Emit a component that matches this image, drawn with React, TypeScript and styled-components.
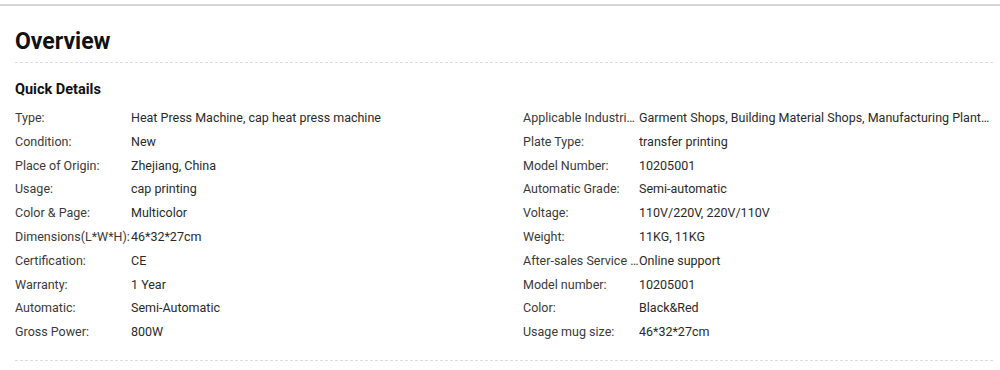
import React from 'react'
import styled, { createGlobalStyle } from 'styled-components'

const GlobalStyle = createGlobalStyle`
  html, body {
    margin: 0;
    padding: 0;
    background: #fff;
  }
  body {
    font-family: Roboto, "Liberation Sans", Arial, sans-serif;
    color: #333;
  }
`

const left = [
  ['Type:', 'Heat Press Machine, cap heat press machine'],
  ['Condition:', 'New'],
  ['Place of Origin:', 'Zhejiang, China'],
  ['Usage:', 'cap printing'],
  ['Color & Page:', 'Multicolor'],
  ['Dimensions(L*W*H):', '46*32*27cm'],
  ['Certification:', 'CE'],
  ['Warranty:', '1 Year'],
  ['Automatic:', 'Semi-Automatic'],
  ['Gross Power:', '800W'],
]

const right = [
  ['Applicable Industries:', 'Garment Shops, Building Material Shops, Manufacturing Plant, Printing Shops, Advertising Company'],
  ['Plate Type:', 'transfer printing'],
  ['Model Number:', '10205001'],
  ['Automatic Grade:', 'Semi-automatic'],
  ['Voltage:', '110V/220V, 220V/110V'],
  ['Weight:', '11KG, 11KG'],
  ['After-sales Service Provided:', 'Online support'],
  ['Model number:', '10205001'],
  ['Color:', 'Black&Red'],
  ['Usage mug size:', '46*32*27cm'],
]

const Panel = styled.section`
  margin-top: 4px;
  border-top: 2px solid #d6d6d6;
  padding: 0 7px 0 15px;
`

const Title = styled.h2`
  margin: 0;
  padding-top: 20px;
  height: 36px;
  font-size: 23px;
  line-height: 31px;
  font-weight: 700;
  color: #111;
  border-bottom: 1px dashed #ddd;
`

const SubTitle = styled.h3`
  margin: 0;
  padding-top: 17px;
  font-size: 14.5px;
  line-height: 20px;
  font-weight: 700;
  color: #111;
`

const Columns = styled.div`
  display: grid;
  grid-template-columns: 508px 1fr;
  padding: 6px 0 16px;
  border-bottom: 1px dashed #ddd;
`

const List = styled.dl<{ $inset?: number }>`
  margin: 0;
  min-width: 0;
  padding-right: ${p => p.$inset ?? 0}px;
`

const Row = styled.div`
  display: grid;
  grid-template-columns: 116px minmax(0, 1fr);
  height: 23.8px;
  line-height: 23.8px;
  font-size: 12.5px;
`

const Cell = styled.span<{ $label?: boolean }>`
  margin: 0;
  white-space: nowrap;
  overflow: hidden;
  text-overflow: ellipsis;
  color: ${p => (p.$label ? '#3a3a3a' : '#2a2a2a')};
  min-width: 0;
`

const Specs = ({ rows, inset }: { rows: string[][]; inset?: number }) => (
  <List $inset={inset}>
    {rows.map(([k, v]) => (
      <Row key={k}>
        <Cell as="dt" $label>{k}</Cell>
        <Cell as="dd">{v}</Cell>
      </Row>
    ))}
  </List>
)

export default function App() {
  return (
    <>
      <GlobalStyle />
      <Panel>
        <Title>Overview</Title>
        <SubTitle>Quick Details</SubTitle>
        <Columns>
          <Specs rows={left} />
          <Specs rows={right} inset={3} />
        </Columns>
      </Panel>
    </>
  )
}
